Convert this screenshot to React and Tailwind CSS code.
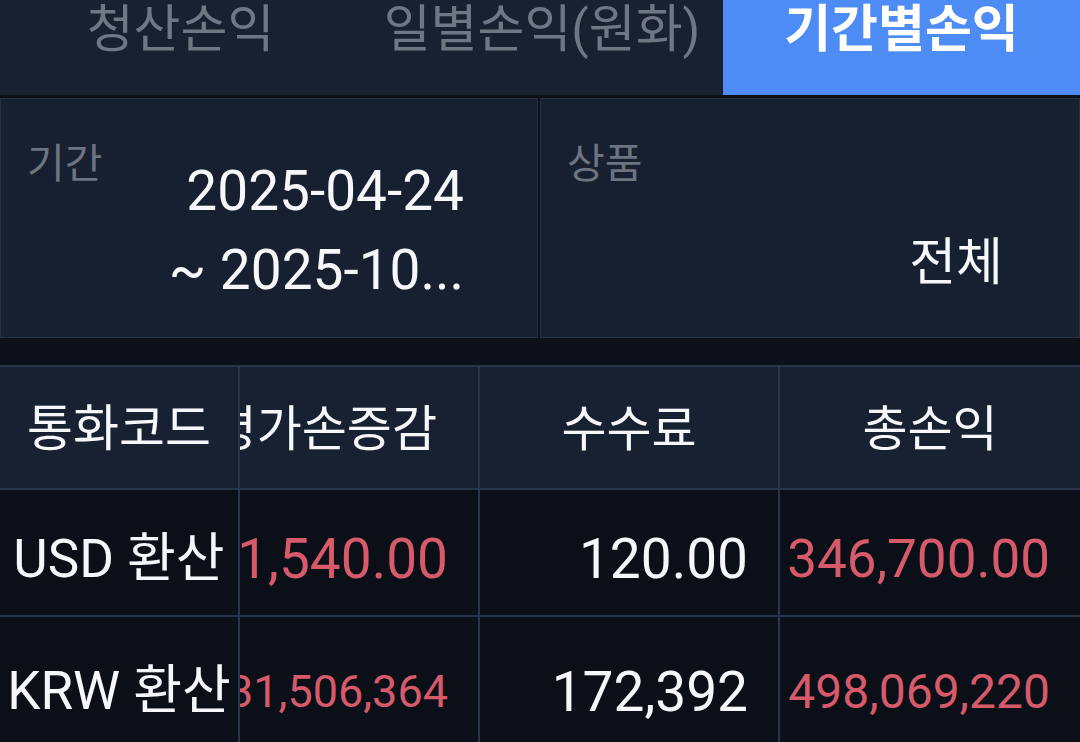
const font = { fontFamily: 'Roboto, "Noto Sans CJK KR", sans-serif' };

const tabs = [
  { label: '청산손익', w: 'w-[361px]' },
  { label: '일별손익(원화)', w: 'w-[362px]' },
  { label: '기간별손익', w: 'flex-1', active: true },
];

const rows = [
  {
    code: 'USD 환산',
    evalDiff: '1,540.00',
    fee: '120.00',
    total: '346,700.00',
    small: false,
  },
  {
    code: 'KRW 환산',
    evalDiff: '31,506,364',
    fee: '172,392',
    total: '498,069,220',
    small: true,
  },
];

const TabBar = () => (
  <div className="flex h-[95px] bg-[#182130]">
    {tabs.map((t) => (
      <div
        key={t.label}
        className={`${t.w} flex justify-center ${
          t.active ? 'bg-[#4c8cf4] font-bold text-white' : 'text-[#6f7783]'
        }`}
      >
        <span className="mt-[-2px] text-[51px] leading-[64px] whitespace-nowrap">
          {t.label}
        </span>
      </div>
    ))}
  </div>
);

const FilterBox = ({ label, children, className = '' }) => (
  <div
    className={`flex h-[240px] justify-between border border-[#243146] bg-[#172030] ${className}`}
  >
    <div className="pt-[39px] pl-[26px] text-[41px] leading-[52px] text-[#6b7480]">
      {label}
    </div>
    {children}
  </div>
);

const Filters = () => (
  <div className="mt-[3px] flex gap-[2px]">
    <FilterBox label="기간" className="w-[538px]">
      <div className="pt-[53px] pr-[73px] text-right text-[55px] leading-[79px] text-[#f5f7fa]">
        <div>2025-04-24</div>
        <div>~ 2025-10...</div>
      </div>
    </FilterBox>
    <FilterBox label="상품" className="flex-1">
      <div className="pt-[130px] pr-[76px] text-[51px] leading-[68px] text-[#f5f7fa]">
        전체
      </div>
    </FilterBox>
  </div>
);

const Cell = ({ children, align = 'center', className = '' }) => (
  <div
    className={`flex items-center overflow-hidden whitespace-nowrap ${
      align === 'right' ? 'justify-end pr-[30px]' : 'justify-center'
    } ${className}`}
  >
    {children}
  </div>
);

const Table = () => (
  <div className="mt-[27px] grid grid-cols-[238px_238px_298px_300px] grid-rows-[121px_125px_150px] gap-[2px] border-t-2 border-[#27344a] bg-[#27344a]">
    <Cell className="bg-[#182131] pt-[4px] text-[50px] text-[#f5f7fa]">통화코드</Cell>
    <Cell align="right" className="bg-[#182131] pt-[4px] pr-[41px] text-[49px] text-[#f5f7fa]">
      평가손증감
    </Cell>
    <Cell className="bg-[#182131] pt-[4px] text-[49px] text-[#f5f7fa]">수수료</Cell>
    <Cell className="bg-[#182131] pt-[4px] text-[49px] text-[#f5f7fa]">총손익</Cell>
    {rows.map((r) => (
      <div key={r.code} className="contents">
        <Cell
          className={`bg-[#0b0f17] text-[53px] text-[#f5f7fa] ${
            r.small ? '' : 'pt-[14px]'
          }`}
        >
          {r.code}
        </Cell>
        <Cell
          align="right"
          className={`bg-[#0b0f17] pr-[29px] text-[#d75a6b] ${
            r.small ? 'text-[45px]' : 'pt-[14px] text-[55px]'
          }`}
        >
          {r.evalDiff}
        </Cell>
        <Cell
          align="right"
          className={`bg-[#0b0f17] text-[55px] text-[#f5f7fa] ${
            r.small ? '' : 'pt-[14px]'
          }`}
        >
          {r.fee}
        </Cell>
        <Cell
          align="right"
          className={`bg-[#0b0f17] text-[#d75a6b] ${
            r.small ? 'text-[48px]' : 'pt-[14px] text-[53px]'
          }`}
        >
          {r.total}
        </Cell>
      </div>
    ))}
  </div>
);

export default function App() {
  return (
    <div className="h-[742px] w-[1080px] overflow-hidden bg-[#0c1119]" style={font}>
      <TabBar />
      <Filters />
      <Table />
    </div>
  );
}
